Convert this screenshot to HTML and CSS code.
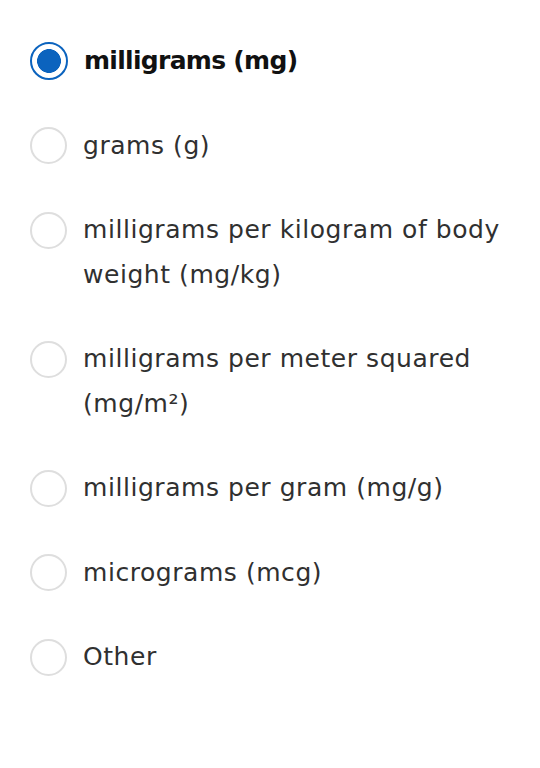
FILE: index.html
```html
<!DOCTYPE html>
<html lang="en">
<head>
<meta charset="utf-8">
<title>Units</title>
<link rel="stylesheet" href="styles.css">
</head>
<body>
<form class="options">
  <label class="option">
    <input class="radio" type="radio" name="unit" checked>
    <span class="text text-selected">milligrams (mg)</span>
  </label>
  <label class="option">
    <input class="radio" type="radio" name="unit">
    <span class="text">grams (g)</span>
  </label>
  <label class="option">
    <input class="radio" type="radio" name="unit">
    <span class="text">milligrams per kilogram of body weight (mg/kg)</span>
  </label>
  <label class="option">
    <input class="radio" type="radio" name="unit">
    <span class="text">milligrams per meter squared (mg/m²)</span>
  </label>
  <label class="option">
    <input class="radio" type="radio" name="unit">
    <span class="text">milligrams per gram (mg/g)</span>
  </label>
  <label class="option">
    <input class="radio" type="radio" name="unit">
    <span class="text">micrograms (mcg)</span>
  </label>
  <label class="option">
    <input class="radio" type="radio" name="unit">
    <span class="text">Other</span>
  </label>
</form>
</body>
</html>
```
FILE: styles.css
```css
html, body {
  margin: 0;
  background: #ffffff;
}

body {
  font-family: "DejaVu Sans", "Liberation Sans", sans-serif;
  color: #333333;
}

.options {
  display: flex;
  flex-direction: column;
  gap: 40px;
  padding: 39px 24px 0 30px;
}

.option {
  display: flex;
  align-items: flex-start;
  gap: 16px;
}

.radio {
  appearance: none;
  -webkit-appearance: none;
  flex: none;
  width: 37px;
  height: 37px;
  margin: 3.75px 0 0 0;
  border: 2px solid #dedede;
  border-radius: 50%;
  background: #ffffff;
  box-sizing: border-box;
}

.radio:checked {
  width: 38px;
  height: 38px;
  margin-top: 3.25px;
  border-color: #0b63be;
  background: radial-gradient(circle, #0b63be 0 11.6px, #ffffff 12.2px);
}

.text {
  font-size: 25px;
  line-height: 44.5px;
  letter-spacing: 0.55px;
  color: #303030;
}

.text-selected {
  font-weight: 700;
  letter-spacing: -0.7px;
  color: #111111;
}
```
